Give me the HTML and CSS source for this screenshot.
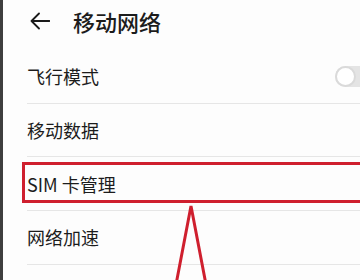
FILE: index.html
```html
<!DOCTYPE html>
<html lang="zh-CN">
<head>
<meta charset="utf-8">
<link rel="stylesheet" href="styles.css">
</head>
<body>
<div class="screen">
  <div class="edge"></div>
  <div class="main">
    <header class="header">
      <svg class="back" width="20" height="18" viewBox="0 0 20 18"><path d="M1.5 9 H19.5 M9 1.5 L1.5 9 L9 16.5" fill="none" stroke="#1a1a1a" stroke-width="1.8" stroke-linecap="round" stroke-linejoin="round"/></svg>
      <h1 class="title">移动网络</h1>
    </header>
    <ul class="list">
      <li class="row"><span class="label">飞行模式</span><span class="toggle"><span class="knob"></span></span></li>
      <li class="row"><span class="label">移动数据</span></li>
      <li class="row"><span class="label">SIM 卡管理</span></li>
      <li class="row"><span class="label">网络加速</span></li>
    </ul>
  </div>
  <div class="highlight"></div>
  <svg class="pointer" width="360" height="280" viewBox="0 0 360 280"><polyline points="176.5,282 191,206 205.5,282" fill="none" stroke="#cf1f2e" stroke-width="3" stroke-linejoin="miter"/></svg>
</div>
</body>
</html>
```
FILE: styles.css
```css
html, body {
  margin: 0;
  padding: 0;
  overflow: hidden;
  background: #fdfdfd;
}
.screen {
  position: relative;
  display: flex;
  width: 360px;
  height: 280px;
  overflow: hidden;
  font-family: "Noto Sans CJK SC", "Noto Sans", sans-serif;
  color: #1c1c1c;
  background: #fdfdfd;
}
.edge {
  width: 3px;
  flex: none;
  background: #3e3e3e;
}
.main {
  flex: 1;
  min-width: 0;
  display: flex;
  flex-direction: column;
}
.header {
  height: 42px;
  display: flex;
  align-items: center;
  padding-left: 27px;
  margin-bottom: 8px;
}
.back {
  display: block;
}
.title {
  margin: 0 0 0 23px;
  font-size: 22px;
  font-weight: 500;
  line-height: 1;
}
.list {
  list-style: none;
  margin: 0;
  padding: 0 0 0 24px;
}
.row {
  box-sizing: border-box;
  height: 53.67px;
  display: flex;
  align-items: center;
  justify-content: space-between;
  border-bottom: 1px solid #e6e6e6;
}
.label {
  font-size: 18px;
  line-height: 1;
}
.toggle {
  width: 25px;
  height: 21px;
  border-radius: 11px 0 0 11px;
  background: #e4e4e4;
  display: flex;
  align-items: center;
}
.knob {
  box-sizing: border-box;
  width: 21px;
  height: 21px;
  border-radius: 50%;
  background: #fff;
  border: 2px solid #dadada;
}
.highlight {
  position: absolute;
  left: 22px;
  top: 162px;
  right: -3px;
  height: 41px;
  box-sizing: border-box;
  border: 3px solid #cf1f2e;
}
.pointer {
  position: absolute;
  left: 0;
  top: 0;
}
```
